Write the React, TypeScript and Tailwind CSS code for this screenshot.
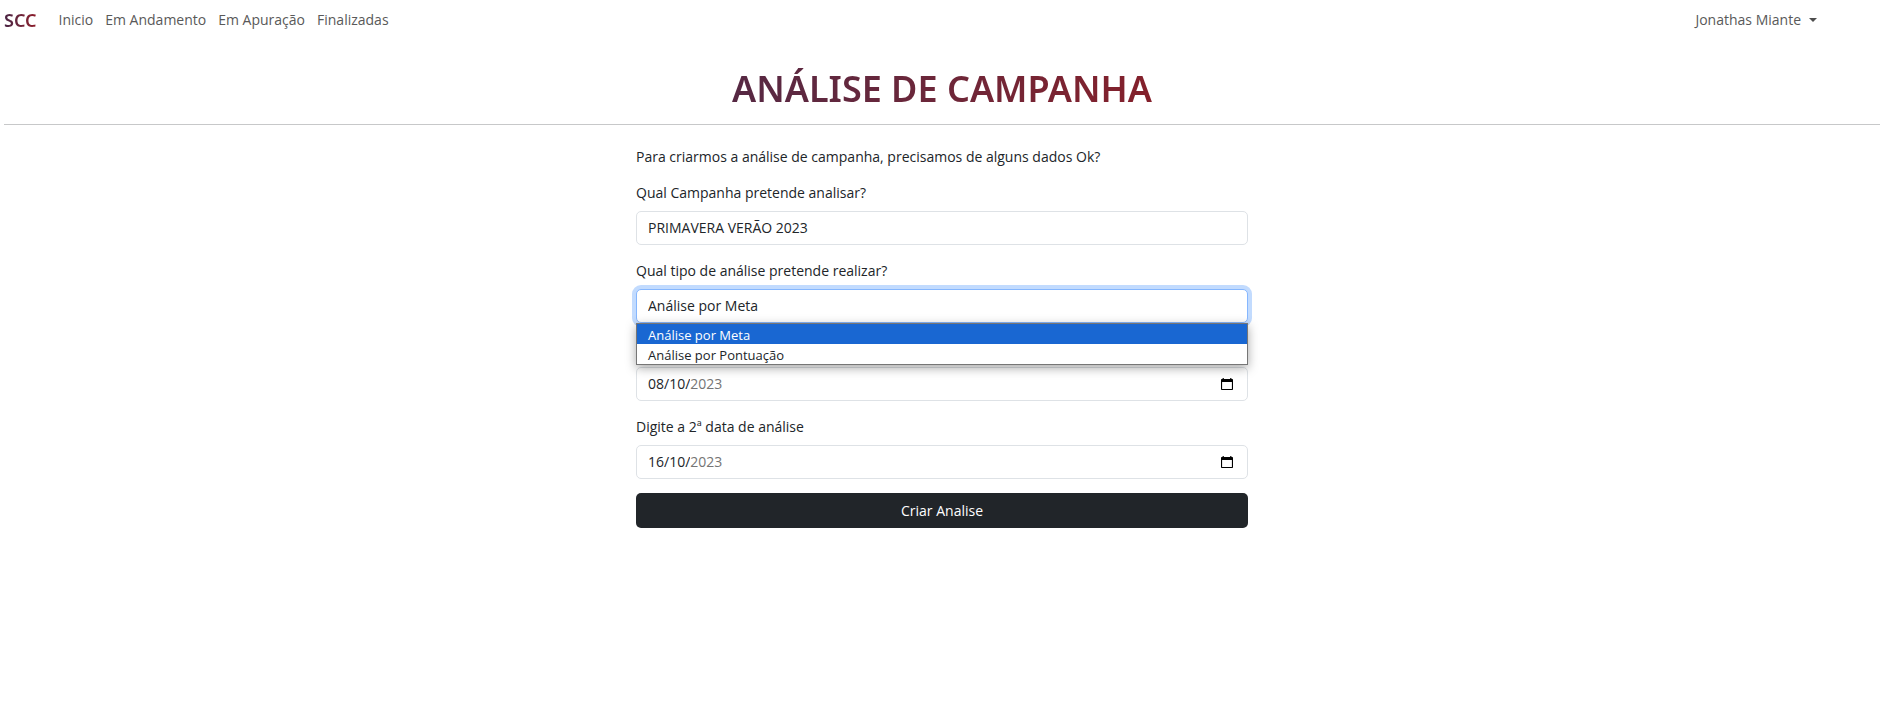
import { useState } from "react";

const navLinks = ["Inicio", "Em Andamento", "Em Apuração", "Finalizadas"];
const analysisTypes = ["Análise por Meta", "Análise por Pontuação"];

const labelClass = "mb-2 block h-5";
const fieldClass =
  "block h-[34px] w-full appearance-none rounded-[5px] border border-[#dee2e6] bg-white px-[11px] outline-none";

function CalendarIcon() {
  return (
    <svg width="12" height="12" viewBox="0 0 12 12" aria-hidden="true">
      <path
        fill="#000"
        fillRule="evenodd"
        d="M1.6 0h1.2v1h6.4V0h1.2v1h.8a.8.8 0 0 1 .8.8v9.4a.8.8 0 0 1-.8.8H.8a.8.8 0 0 1-.8-.8V1.8A.8.8 0 0 1 .8 1h.8zM1.1 4v6.9h9.8V4z"
      />
    </svg>
  );
}

type DateFieldProps = { id: string; label: string; dayMonth: string; year: string; covered?: boolean };

function DateField({ id, label, dayMonth, year, covered = false }: DateFieldProps) {
  return (
    <div className="mb-4">
      <label htmlFor={id} className={labelClass}>
        {covered ? "" : label}
      </label>
      <div className="flex h-[34px] items-center rounded-[5px] border border-[#dee2e6] bg-white pr-[14px] pb-px pl-[11px]">
        <input
          id={id}
          aria-label={label}
          defaultValue={dayMonth}
          className="h-5 field-sizing-content outline-none"
        />
        <input
          aria-label={`${label} (ano)`}
          defaultValue={year}
          className="h-5 field-sizing-content text-[#757575] outline-none"
        />
        <button type="button" aria-label="Abrir calendário" className="ml-auto">
          <CalendarIcon />
        </button>
      </div>
    </div>
  );
}

export default function App() {
  const [type, setType] = useState(analysisTypes[0]);

  return (
    <div className="min-h-screen bg-white pr-[10px] pl-1 font-['Open_Sans','Segoe_UI',sans-serif] text-sm leading-5 text-[#212529]">
      <nav className="flex h-[39px] items-center text-[#595959]">
        <a
          href="#"
          className="mr-[22px] bg-linear-to-r from-[#4a2545] to-[#8f1a28] bg-clip-text font-['Noto_Sans',sans-serif] text-lg font-semibold text-transparent"
        >
          SCC
        </a>
        <ul className="flex gap-3">
          {navLinks.map((name) => (
            <li key={name}>
              <a href="#">{name}</a>
            </li>
          ))}
        </ul>
        <button type="button" className="mr-[63px] ml-auto flex items-center gap-2">
          Jonathas Miante
          <svg width="8" height="4" viewBox="0 0 8 4" fill="#4d4d4d" aria-hidden="true">
            <path d="M0 0h8L4 4z" />
          </svg>
        </button>
      </nav>

      <header className="flex h-[86px] justify-center border-b border-[#c7c8c9] pt-[26px]">
        <h1 className="h-12 bg-linear-to-r from-[#562843] to-[#84202b] bg-clip-text font-['Noto_Sans',sans-serif] text-[36px] leading-[48px] font-semibold text-transparent">
          ANÁLISE DE CAMPANHA
        </h1>
      </header>

      <main className="mx-auto w-[612px] max-w-full pt-[22px]">
        <p className="mb-4">Para criarmos a análise de campanha, precisamos de alguns dados Ok?</p>
        <form>
          <div className="mb-4">
            <label htmlFor="campaign" className={labelClass}>
              Qual Campanha pretende analisar?
            </label>
            <select id="campaign" className={fieldClass}>
              <option>PRIMAVERA VERÃO 2023</option>
            </select>
          </div>

          <div className="relative mb-4">
            <label htmlFor="type" className={labelClass}>
              Qual tipo de análise pretende realizar?
            </label>
            <select
              id="type"
              value={type}
              onChange={(e) => setType(e.target.value)}
              className="block h-[34px] w-full appearance-none rounded-[5px] border border-[#86b7fe] bg-white px-[11px] ring-[4px] ring-[#c2dbfe] outline-none"
            >
              {analysisTypes.map((t) => (
                <option key={t}>{t}</option>
              ))}
            </select>
            <ul
              role="listbox"
              aria-label="Tipo de análise"
              className="absolute top-full right-0 left-0 border border-[#767676] bg-white text-[13px] shadow-[0_3px_10px_rgba(0,0,0,0.35)]"
            >
              {analysisTypes.map((t) => (
                <li
                  key={t}
                  role="option"
                  aria-selected={t === type}
                  onClick={() => setType(t)}
                  className="h-5 px-[11px] leading-[22px] aria-selected:bg-[#1967d2] aria-selected:font-medium aria-selected:text-white"
                >
                  {t}
                </li>
              ))}
            </ul>
          </div>

          <DateField id="first-date" label="Digite a 1ª data de análise" dayMonth="08/10/" year="2023" covered />
          <DateField id="second-date" label="Digite a 2ª data de análise" dayMonth="16/10/" year="2023" />

          <button
            type="submit"
            className="-mt-[2px] h-[35px] w-full rounded-[5px] bg-[#212529] text-white"
          >
            Criar Analise
          </button>
        </form>
      </main>
    </div>
  );
}
